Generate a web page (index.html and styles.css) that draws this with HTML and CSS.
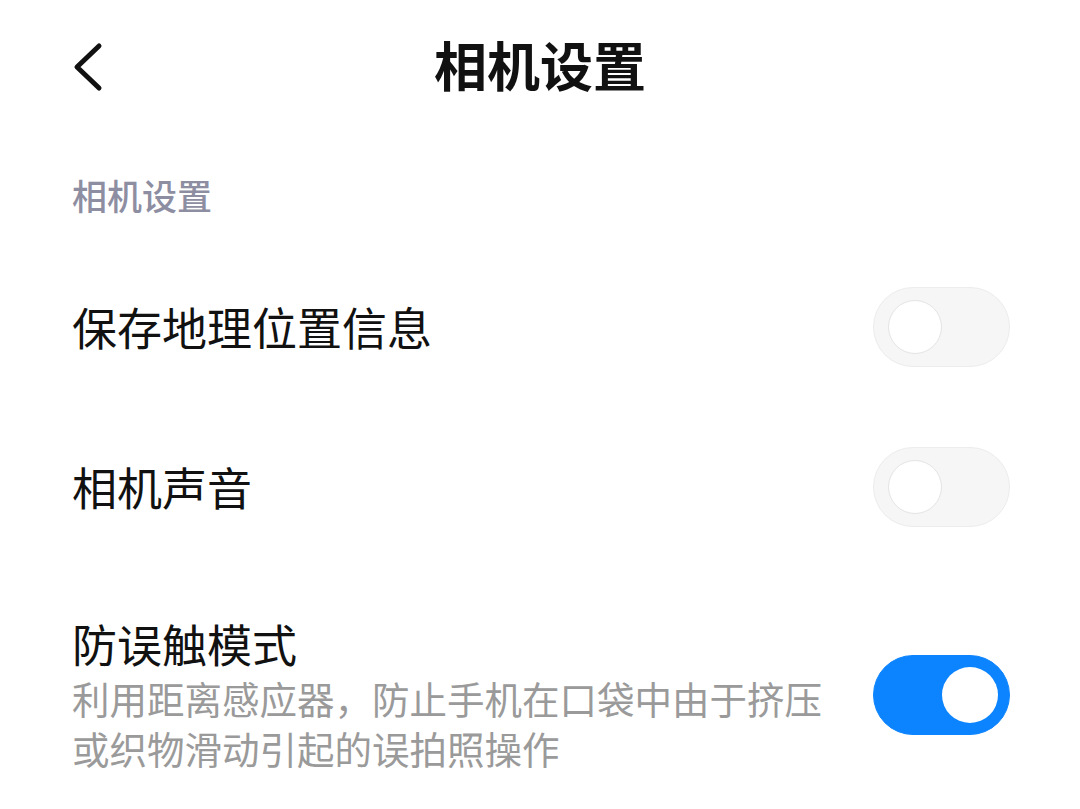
FILE: index.html
```html
<!DOCTYPE html>
<html lang="zh-CN">
<head>
<meta charset="utf-8">
<title>相机设置</title>
<link rel="stylesheet" href="styles.css">
</head>
<body>
<div class="page">
  <header class="topbar">
    <svg class="back" width="34" height="50" viewBox="0 0 34 50">
      <polyline points="28,4 6,25 28,46" fill="none" stroke="#111" stroke-width="5" stroke-linecap="round" stroke-linejoin="round"/>
    </svg>
    <h1 class="title">相机设置</h1>
  </header>
  <div class="section-label">相机设置</div>
  <div class="row">
    <div class="text"><div class="item-title">保存地理位置信息</div></div>
    <div class="switch"><div class="knob"></div></div>
  </div>
  <div class="row">
    <div class="text"><div class="item-title">相机声音</div></div>
    <div class="switch"><div class="knob"></div></div>
  </div>
  <div class="row row-desc">
    <div class="text">
      <div class="item-title">防误触模式</div>
      <div class="item-desc">利用距离感应器，防止手机在口袋中由于挤压或织物滑动引起的误拍照操作</div>
    </div>
    <div class="switch on"><div class="knob"></div></div>
  </div>
</div>
</body>
</html>
```
FILE: styles.css
```css
html, body {
  margin: 0;
  padding: 0;
  background: #ffffff;
}
body {
  font-family: "Noto Sans CJK SC", "Noto Sans", sans-serif;
  color: #111;
}
.page {
  width: 1080px;
  height: 809px;
  overflow: hidden;
}
.topbar {
  position: relative;
  height: 128px;
  display: flex;
  align-items: center;
  justify-content: center;
}
.back {
  position: absolute;
  left: 71px;
  top: 42px;
}
.title {
  margin: 0;
  font-size: 53px;
  font-weight: 700;
  line-height: 60px;
  color: #111;
}
.section-label {
  margin: 42px 0 27px 72px;
  font-size: 35px;
  line-height: 50px;
  color: #8e8ea2;
  font-weight: 500;
}
.row {
  display: flex;
  align-items: center;
  justify-content: space-between;
  height: 160px;
  padding: 0 70px 0 72px;
}
.row-desc {
  height: auto;
  padding-top: 50px;
}
.item-title {
  font-size: 45px;
  line-height: 56px;
  color: #111;
}
.row-desc .item-title {
  line-height: 54px;
  margin-bottom: 2px;
}
.item-desc {
  width: 760px;
  font-size: 37.5px;
  line-height: 50px;
  color: #9a9a9a;
}
.switch {
  position: relative;
  flex: none;
  box-sizing: border-box;
  width: 137px;
  height: 80px;
  border-radius: 40px;
  background: #f6f6f6;
  border: 1px solid #ececec;
}
.switch .knob {
  position: absolute;
  left: 14px;
  top: 12px;
  box-sizing: border-box;
  width: 54px;
  height: 54px;
  border-radius: 50%;
  background: #fff;
  border: 1px solid #e4e4e4;
}
.switch.on {
  background: #0d84ff;
  border-color: #0d84ff;
}
.switch.on .knob {
  left: auto;
  right: 11px;
  top: 11px;
  width: 56px;
  height: 56px;
  border: none;
}
```
